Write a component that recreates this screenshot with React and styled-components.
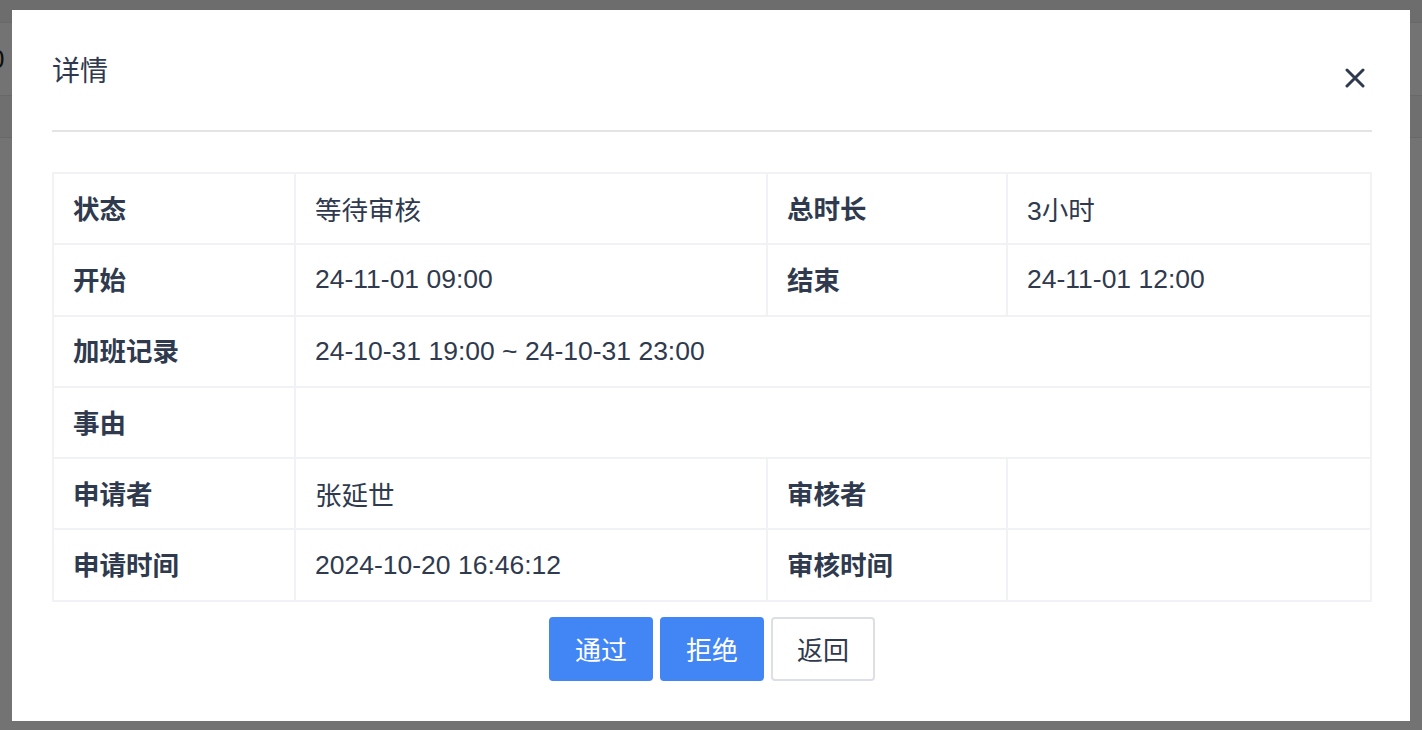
import React from "react";
import styled, { createGlobalStyle } from "styled-components";

const GlobalStyle = createGlobalStyle`
  html, body {
    margin: 0;
    padding: 0;
    background: #fff;
    font-family: "Liberation Sans", "Noto Sans CJK SC", sans-serif;
  }
`;

const rows = [
  [
    { label: "状态", value: "等待审核" },
    { label: "总时长", value: "3小时" },
  ],
  [
    { label: "开始", value: "24-11-01 09:00" },
    { label: "结束", value: "24-11-01 12:00" },
  ],
  [{ label: "加班记录", value: "24-10-31 19:00 ~ 24-10-31 23:00", wide: true }],
  [{ label: "事由", value: "", wide: true }],
  [
    { label: "申请者", value: "张延世" },
    { label: "审核者", value: "" },
  ],
  [
    { label: "申请时间", value: "2024-10-20 16:46:12" },
    { label: "审核时间", value: "" },
  ],
];

function App() {
  return (
    <>
      <GlobalStyle />
      <Page>
        <PageTop />
        <PageRow>
          <PageCell>0</PageCell>
        </PageRow>
        <PageHead />
      </Page>
      <Overlay>
        <Dialog>
          <Header>
            <Title>详情</Title>
            <CloseBtn aria-label="close">
              <svg width="20" height="20" viewBox="0 0 20 20">
                <path
                  d="M2 2 L18 18 M18 2 L2 18"
                  stroke="#2f3a4e"
                  strokeWidth="3"
                  strokeLinecap="round"
                />
              </svg>
            </CloseBtn>
          </Header>
          <Table>
            <colgroup>
              <col style={{ width: 242 }} />
              <col style={{ width: 472 }} />
              <col style={{ width: 240 }} />
              <col />
            </colgroup>
            <tbody>
              {rows.map((row, i) => (
                <tr key={i}>
                  {row.map((c) => (
                    <React.Fragment key={c.label}>
                      <LabelCell>{c.label}</LabelCell>
                      <ValueCell colSpan={c.wide ? 3 : 1}>{c.value}</ValueCell>
                    </React.Fragment>
                  ))}
                </tr>
              ))}
            </tbody>
          </Table>
          <Actions>
            <Button $primary>通过</Button>
            <Button $primary>拒绝</Button>
            <Button>返回</Button>
          </Actions>
        </Dialog>
      </Overlay>
    </>
  );
}

export default App;

const Page = styled.div`
  width: 1422px;
  height: 730px;
  background: #fff;
`;

const PageTop = styled.div`
  height: 22px;
  background: #f2f2f2;
  border-bottom: 1px solid #e6e6e6;
`;

const PageRow = styled.div`
  height: 72px;
  display: flex;
  align-items: center;
  border-bottom: 1px solid #e6e6e6;
`;

const PageCell = styled.div`
  margin-left: -10px;
  font-size: 26px;
  color: #222;
`;

const PageHead = styled.div`
  height: 41px;
  background: #f7f7f7;
  border-bottom: 1px solid #e6e6e6;
`;

const Overlay = styled.div`
  position: fixed;
  inset: 0;
  background: rgba(0, 0, 0, 0.55);
  display: flex;
  align-items: flex-start;
  justify-content: flex-start;
  padding: 10px 12px;
  box-sizing: border-box;
`;

const Dialog = styled.div`
  width: 1400px;
  height: 711px;
  background: #fff;
  box-sizing: border-box;
  padding: 0 38px 0 40px;
  display: flex;
  flex-direction: column;
  color: #2f3a4e;
`;

const Header = styled.div`
  height: 122px;
  flex-shrink: 0;
  box-sizing: border-box;
  border-bottom: 2px solid #e4e4e4;
  display: flex;
  justify-content: space-between;
  align-items: flex-start;
`;

const Title = styled.h2`
  margin: 42px 0 0;
  font-size: 28px;
  font-weight: 400;
  line-height: 40px;
  color: #2f3a4e;
`;

const CloseBtn = styled.button`
  margin: 58px 7px 0 0;
  padding: 0;
  border: none;
  background: none;
  width: 20px;
  height: 20px;
  cursor: pointer;
  display: flex;
`;

const Table = styled.table`
  margin-top: 40px;
  width: 100%;
  border-collapse: collapse;
  table-layout: fixed;
  font-size: 26.5px;

  td {
    border: 2px solid #f0f2f5;
    height: 71.3px;
    padding: 0 19px;
    box-sizing: border-box;
  }
`;

const LabelCell = styled.td`
  font-weight: 700;
  color: #2f3a4e;
  padding-bottom: 3px !important;
`;

const ValueCell = styled.td`
  font-weight: 400;
  color: #2f3a4e;
`;

const Actions = styled.div`
  margin-top: 15px;
  display: flex;
  justify-content: center;
  gap: 7px;
`;

const Button = styled.button`
  width: 104px;
  height: 64px;
  border-radius: 4px;
  font-size: 26px;
  font-family: "Liberation Sans", "Noto Sans CJK SC", sans-serif;
  cursor: pointer;
  border: 2px solid ${(p) => (p.$primary ? "#4285f4" : "#dcdfe6")};
  background: ${(p) => (p.$primary ? "#4285f4" : "#fff")};
  color: ${(p) => (p.$primary ? "#fff" : "#2f3a4e")};
`;
